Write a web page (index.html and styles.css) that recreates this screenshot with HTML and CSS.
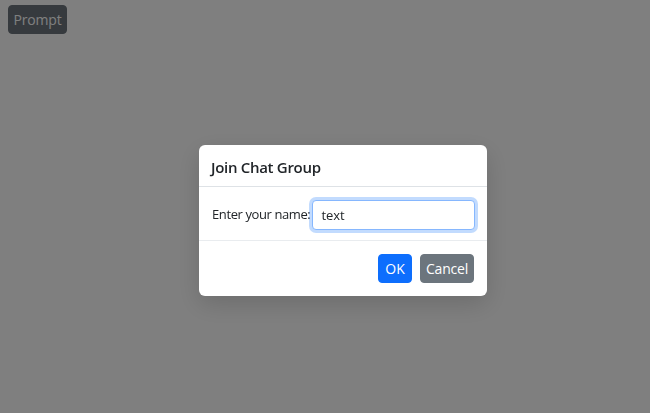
FILE: index.html
```html
<!DOCTYPE html>
<html lang="en">
<head>
    <meta charset="UTF-8">
    <title>Prompt</title>
    <link rel="stylesheet" href="styles.css">
</head>
<body>
    <button class="btn btn-secondary prompt-btn">Prompt</button>

    <div class="backdrop"></div>
    <div class="modal">
        <div class="dialog">
            <div class="dialog-header">
                <h5 class="dialog-title">Join Chat Group</h5>
            </div>
            <div class="dialog-body">
                <label for="name">Enter your name:</label>
                <input id="name" class="field" type="text" value="text">
            </div>
            <div class="dialog-footer">
                <button class="btn btn-primary btn-ok">OK</button>
                <button class="btn btn-secondary btn-cancel">Cancel</button>
            </div>
        </div>
    </div>
</body>
</html>
```

FILE: styles.css
```css
*{
    box-sizing: border-box;
}
body{
    margin: 0;
    padding: 5px 8px;
    background: #fff;
    font-family: "Open Sans", "Noto Sans", sans-serif;
    color: #212529;
}
.btn{
    font-family: inherit;
    font-size: 14px;
    line-height: 20px;
    padding: 0;
    border: 1px solid transparent;
    border-radius: 4px;
    color: #fff;
    cursor: pointer;
}
.btn-primary{
    background: #0d6efd;
    border-color: #0d6efd;
}
.btn-secondary{
    background: #6c757d;
    border-color: #6c757d;
}
.prompt-btn{
    width: 59px;
    height: 29px;
    letter-spacing: -.2px;
}
.backdrop{
    position: fixed;
    inset: 0;
    background: #000;
    opacity: .5;
}
.modal{
    position: fixed;
    inset: 0;
    padding: 145px 0 0 199px;
}
.dialog{
    width: 288px;
    background: #fff;
    border-radius: 6px;
    box-shadow: 0 8px 24px rgba(0,0,0,.15);
}
.dialog-header{
    height: 42px;
    padding: 0 12px;
    display: flex;
    align-items: center;
    border-bottom: 1px solid #dee2e6;
}
.dialog-title{
    margin: 2px 0 0;
    font-size: 15px;
    font-weight: 600;
    letter-spacing: -.3px;
}
.dialog-body{
    height: 54px;
    padding: 0 12px 0 13px;
    display: flex;
    align-items: center;
    gap: 2px;
    font-size: 13px;
    white-space: nowrap;
    border-bottom: 1px solid #e9ecef;
}
.dialog-body label{
    letter-spacing: -.4px;
}
.field{
    width: 163px;
    min-width: 0;
    flex: none;
    height: 30px;
    margin-top: 2px;
    padding: 0 8px;
    font-family: inherit;
    font-size: 13px;
    color: #212529;
    border: 1px solid #86b7fe;
    border-radius: 4px;
    outline: none;
    box-shadow: 0 0 0 3px rgba(13,110,253,.25);
}
.dialog-footer{
    height: 55px;
    padding: 0 13px 0 12px;
    display: flex;
    justify-content: flex-end;
    align-items: center;
    gap: 8px;
}
.dialog-footer .btn{
    height: 29px;
}
.btn-ok{
    width: 34px;
}
.btn-cancel{
    width: 54px;
    letter-spacing: -.2px;
}
```
